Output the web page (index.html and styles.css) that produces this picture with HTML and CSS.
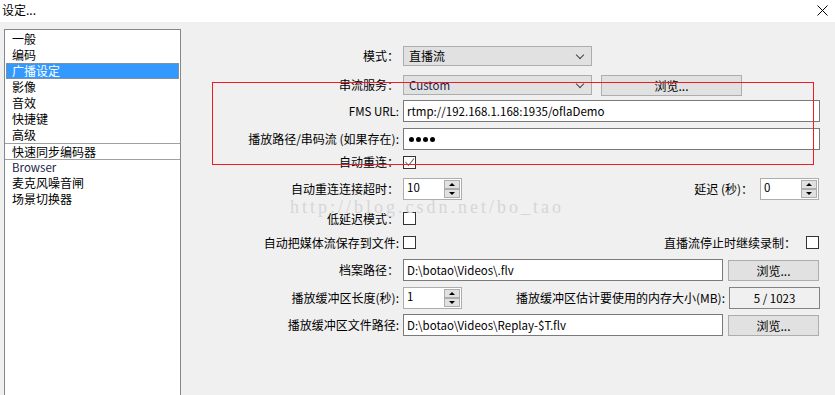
FILE: index.html
```html
<!DOCTYPE html>
<html lang="zh-CN">

<head>
    <meta charset="UTF-8">
    <title>设定...</title>
    <link rel="stylesheet" href="styles.css">
</head>

<body>
    <!-- 标题栏 -->
    <header class="titlebar">
        <span class="title">设定...</span>
        <svg class="close" width="11" height="11" viewBox="0 0 11 11">
            <path d="M0.5 0.5 L10.5 10.5 M10.5 0.5 L0.5 10.5" stroke="#000" stroke-width="1" fill="none" />
        </svg>
    </header>

    <section class="window">
        <!-- 左侧分类列表 -->
        <ul class="nav">
            <li>一般</li>
            <li>编码</li>
            <li class="active">广播设定</li>
            <li>影像</li>
            <li>音效</li>
            <li>快捷键</li>
            <li>高级</li>
            <li class="sep">快速同步编码器</li>
            <li class="sep latin">Browser</li>
            <li>麦克风噪音闸</li>
            <li>场景切换器</li>
        </ul>

        <!-- 广播设定表单 -->
        <div class="form">
            <label>模式：</label>
            <div class="ctrl">
                <div class="select w189">直播流<span class="chev"></span></div>
            </div>

            <label>串流服务：</label>
            <div class="ctrl">
                <div class="select w189 latin">Custom<span class="chev"></span></div>
                <button class="btn w141">浏览...</button>
            </div>

            <label class="latin">FMS URL:</label>
            <div class="ctrl">
                <div class="input full latin">rtmp://192.168.1.168:1935/oflaDemo</div>
            </div>

            <label>播放路径/串码流 (如果存在):</label>
            <div class="ctrl">
                <div class="input full dots"><i></i><i></i><i></i><i></i></div>
            </div>

            <label>自动重连：</label>
            <div class="ctrl">
                <span class="check">
                    <svg width="11" height="11" viewBox="0 0 11 11">
                        <path d="M1.5 5 L4.5 8.5 L10 1.5" stroke="#666" stroke-width="1.1" fill="none" />
                    </svg>
                </span>
            </div>

            <label>自动重连连接超时：</label>
            <div class="ctrl split">
                <div class="spin">
                    <span class="spin-val">10</span>
                    <span class="spin-btns"><i class="up"></i><i class="down"></i></span>
                </div>
                <div class="side">
                    <span class="side-label">延迟 (秒)：</span>
                    <div class="spin">
                        <span class="spin-val">0</span>
                        <span class="spin-btns"><i class="up"></i><i class="down"></i></span>
                    </div>
                </div>
            </div>

            <label>低延迟模式：</label>
            <div class="ctrl">
                <span class="check"></span>
            </div>

            <label>自动把媒体流保存到文件:</label>
            <div class="ctrl split">
                <span class="check"></span>
                <div class="side">
                    <span class="side-label">直播流停止时继续录制：</span>
                    <span class="check"></span>
                </div>
            </div>

            <label>档案路径：</label>
            <div class="ctrl">
                <div class="input w320 latin">D:\botao\Videos\.flv</div>
                <button class="btn w91">浏览...</button>
            </div>

            <label>播放缓冲区长度(秒):</label>
            <div class="ctrl">
                <div class="spin">
                    <span class="spin-val">1</span>
                    <span class="spin-btns"><i class="up"></i><i class="down"></i></span>
                </div>
                <span class="mid-label">播放缓冲区估计要使用的内存大小(MB):</span>
                <div class="readout w91 latin">5 / 1023</div>
            </div>

            <label>播放缓冲区文件路径:</label>
            <div class="ctrl">
                <div class="input w320 latin">D:\botao\Videos\Replay-$T.flv</div>
                <button class="btn w91">浏览...</button>
            </div>
        </div>

        <!-- 水印和标注框 -->
        <div class="watermark">http://blog.csdn.net/bo_tao</div>
        <div class="mark"></div>
    </section>
</body>

</html>
```

FILE: styles.css
```css
html,
body {
    margin: 0;
    padding: 0;
    height: 100%;
    overflow: hidden;
}

body {
    font-family: "Noto Sans CJK SC", "Liberation Sans", sans-serif;
    font-size: 12px;
    color: #000;
    background: #f0f0f0;
}

.titlebar {
    height: 22px;
    background: #fff;
    display: flex;
    align-items: center;
    justify-content: space-between;
    padding: 0 7px 2px 2px;
    box-sizing: border-box;
}

.title {
    line-height: 16px;
}

.window {
    position: relative;
    display: flex;
    align-items: flex-start;
    height: 373px;
    overflow: hidden;
}

/* 左侧列表 */
.nav {
    list-style: none;
    margin: 7px 0 0 4px;
    padding: 1px 0;
    width: 177px;
    height: 370px;
    box-sizing: border-box;
    background: #fff;
    border: 1px solid #828790;
    flex-shrink: 0;
}

.nav li {
    height: 16px;
    line-height: 16px;
    margin: 0 1px;
    padding-left: 6px;
    box-sizing: border-box;
}

.nav li.sep {
    border-top: 1px solid #a0a0a0;
    line-height: 15px;
    margin: 0;
    padding-left: 7px;
}

.nav li.active {
    background: #3399ff;
    color: #fff;
    outline: 1px dotted #c8894a;
    outline-offset: -1px;
}

.nav li.latin {
    font-size: 11.5px;
    color: #1c1c44;
}

/* 表单 */
.form {
    display: grid;
    grid-template-columns: 218px 417px;
    grid-template-rows: 28px 29px 24px 32px 14px 40px 19px 29px 26px 30px 24px;
    column-gap: 4px;
    margin-top: 20px;
}

.form label {
    display: flex;
    align-items: center;
    justify-content: flex-end;
    line-height: 16px;
    white-space: nowrap;
}

.ctrl {
    display: flex;
    align-items: center;
}

.split {
    justify-content: space-between;
}

.side {
    display: flex;
    align-items: center;
}

.latin {
    font-size: 11.5px;
}

.select,
.btn,
.input,
.readout {
    box-sizing: border-box;
    font-family: inherit;
    white-space: nowrap;
}

.select {
    position: relative;
    height: 20px;
    line-height: 18px;
    padding-left: 5px;
    background: #e1e1e1;
    border: 1px solid #adadad;
}

.select.latin {
    color: #1c1c44;
}

.chev {
    position: absolute;
    right: 8px;
    top: 5px;
    width: 5px;
    height: 5px;
    border-right: 1px solid #444;
    border-bottom: 1px solid #444;
    transform: rotate(45deg);
}

.btn {
    height: 21px;
    margin-left: auto;
    padding: 0;
    font-size: 12px;
    background: #e1e1e1;
    border: 1px solid #adadad;
    color: #000;
}

.w141 {
    width: 141px;
    margin-left: 9px;
    margin-top: 2px;
}

.w189 {
    width: 189px;
}

.w320 {
    width: 320px;
}

.w91 {
    width: 91px;
    margin-left: 5px;
}

.input {
    height: 22px;
    line-height: 20px;
    padding-left: 3px;
    background: #fff;
    border: 1px solid #7a7a7a;
}

.full {
    width: 417px;
}

.dots {
    display: flex;
    align-items: center;
    gap: 2px;
    padding-left: 5px;
}

.dots i {
    width: 5px;
    height: 5px;
    border-radius: 50%;
    background: #000;
}

.readout {
    height: 22px;
    line-height: 20px;
    text-align: center;
    background: #f0f0f0;
    border: 1px solid #838383;
}

/* 复选框 */
.check {
    display: inline-flex;
    align-items: center;
    justify-content: center;
    width: 13px;
    height: 13px;
    box-sizing: border-box;
    background: #fff;
    border: 1px solid #333;
}

.side .check {
    margin-left: 10px;
    margin-right: 1px;
}

.side-label {
    line-height: 16px;
}

/* 数字框 */
.spin {
    display: flex;
    width: 59px;
    height: 22px;
    box-sizing: border-box;
    background: #fff;
    border: 1px solid #adadad;
}

.side .spin {
    margin-left: 7px;
    margin-right: 1px;
}

.spin-val {
    flex: 1;
    padding-left: 3px;
    font-size: 11.5px;
    line-height: 16px;
}

.spin-btns {
    display: flex;
    flex-direction: column;
    justify-content: space-between;
    width: 16px;
    padding: 1px 1px 1px 0;
}

.spin-btns i {
    display: flex;
    align-items: center;
    justify-content: center;
    height: 9px;
    box-sizing: border-box;
    background: #e1e1e1;
    border: 1px solid #adadad;
}

.spin-btns i::after {
    content: "";
    border-left: 3px solid transparent;
    border-right: 3px solid transparent;
}

.spin-btns .up::after {
    border-bottom: 3px solid #000;
}

.spin-btns .down::after {
    border-top: 3px solid #000;
}

.mid-label {
    flex: 1;
    text-align: right;
    line-height: 16px;
    white-space: nowrap;
}

.mid-label + .readout {
    margin-left: 4px;
}

/* 水印 */
.watermark {
    position: absolute;
    left: 290px;
    top: 175px;
    font-family: "Liberation Serif", serif;
    font-size: 18px;
    letter-spacing: 3px;
    color: #d6d6d6;
    pointer-events: none;
}

/* 红色标注框 */
.mark {
    position: absolute;
    left: 212px;
    top: 60px;
    width: 602px;
    height: 83px;
    border: 1px solid #ed1c24;
    box-sizing: border-box;
    pointer-events: none;
}
```
